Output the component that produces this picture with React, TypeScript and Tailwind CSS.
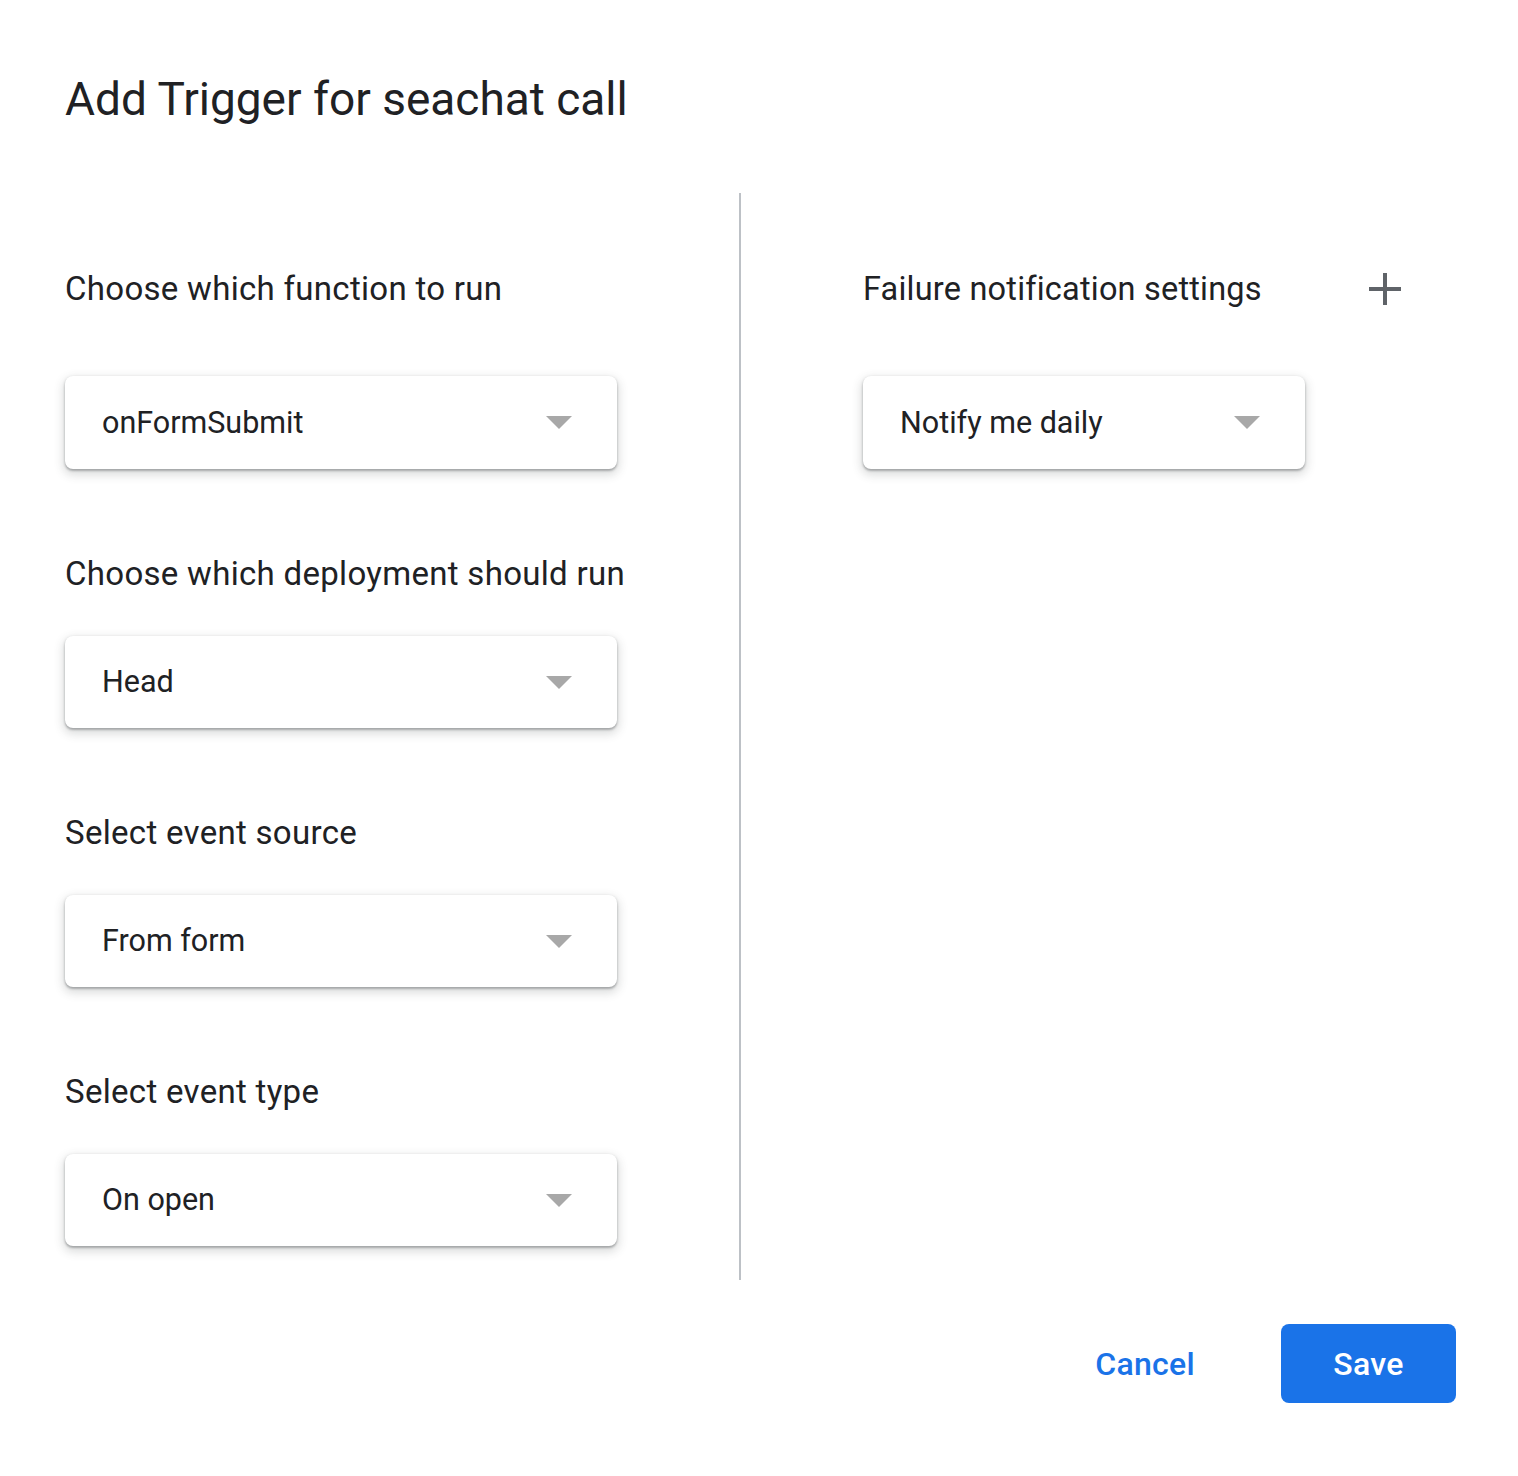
const fieldShadow =
  'shadow-[0_2px_2px_rgba(60,64,67,0.25),0_4px_10px_2px_rgba(60,64,67,0.18),0_1px_3px_rgba(60,64,67,0.2)]';

function Select({ value, width, height }: { value: string; width: string; height: string }) {
  return (
    <div
      className={`flex items-center justify-between rounded-[8px] bg-white pl-[37px] pr-[45px] ${fieldShadow} ${width} ${height}`}
    >
      <span className="font-['Roboto',sans-serif] text-[30.5px] text-[#202124]">{value}</span>
      <svg width="26" height="13" viewBox="0 0 26 13" className="shrink-0">
        <path d="M0 0 L26 0 L13 13 Z" fill="#a8a8a8" />
      </svg>
    </div>
  );
}

function Field({ label, value, first }: { label: string; value: string; first?: boolean }) {
  return (
    <div className={first ? 'pt-[76px]' : 'pt-[85px]'}>
      <div className="h-[40px] text-[33px] leading-[40px] tracking-[0.3px] text-[#202124]">{label}</div>
      <div className={first ? 'pt-[67px]' : 'pt-[42px]'}>
        <Select value={value} width="w-[552px]" height={first ? 'h-[93px]' : 'h-[92px]'} />
      </div>
    </div>
  );
}

export default function App() {
  return (
    <div className="min-h-[1476px] w-[1518px] bg-white font-['Roboto',sans-serif]">
      <h1 className="pl-[65px] pt-[77px] text-[46px] leading-[44px] text-[#202124]">
        Add Trigger for seachat call
      </h1>

      <div className="mt-[72px] flex pl-[65px]">
        <div className="w-[674px]">
          <Field label="Choose which function to run" value="onFormSubmit" first />
          <Field label="Choose which deployment should run" value="Head" />
          <Field label="Select event source" value="From form" />
          <Field label="Select event type" value="On open" />
        </div>

        <div className="h-[1087px] w-[2px] bg-[#bdc1c6]" />

        <div className="pl-[122px]">
          <div className="mt-[76px] flex h-[40px] w-[538px] items-center justify-between">
            <span className="text-[32.5px] leading-[40px] tracking-[0.2px] text-[#202124]">
              Failure notification settings
            </span>
            <svg width="32" height="32" viewBox="0 0 32 32" className="shrink-0">
              <path d="M16 0 V32 M0 16 H32" stroke="#5f6368" strokeWidth="4" />
            </svg>
          </div>
          <div className="pt-[67px]">
            <Select value="Notify me daily" width="w-[442px]" height="h-[93px]" />
          </div>
        </div>
      </div>

      <div className="mt-[44px] flex items-center justify-end pr-[62px]">
        <button className="mr-[86px] text-[32px] font-medium tracking-[0.3px] text-[#1a73e8]">Cancel</button>
        <button className="h-[79px] w-[175px] rounded-[8px] bg-[#1a73e8] text-[32px] font-medium tracking-[0.3px] text-white">
          Save
        </button>
      </div>
    </div>
  );
}
